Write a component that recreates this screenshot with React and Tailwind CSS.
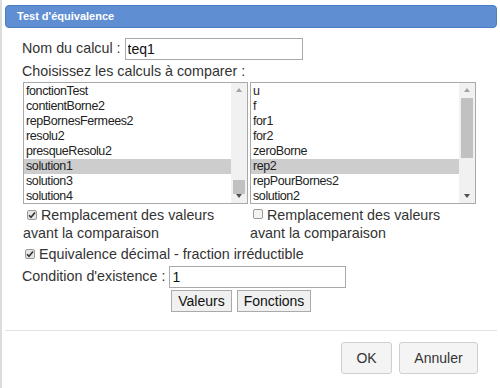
import React, { useState } from 'react';

const left = ['fonctionTest', 'contientBorne2', 'repBornesFermees2', 'resolu2', 'presqueResolu2', 'solution1', 'solution3', 'solution4'];
const right = ['u', 'f', 'for1', 'for2', 'zeroBorne', 'rep2', 'repPourBornes2', 'solution2'];

const ListBox = ({ items, selected, thumbTop, thumbHeight, width }) => (
  <div className={`flex h-[122px] border border-[#a9a9a9] bg-white ${width}`}>
    <div className="flex-1 overflow-hidden pt-[1px]">
      {items.map((it) => (
        <div
          key={it}
          className={`h-[15px] pl-[2px] text-[12.5px] leading-[15px] tracking-[-0.4px] text-[#222] ${it === selected ? 'bg-[#cdcdcd]' : ''}`}
        >
          {it}
        </div>
      ))}
    </div>
    <div className="relative w-[16px] bg-[#f1f1f1]">
      <div className="absolute left-[5px] top-[5px] h-0 w-0 border-x-[3px] border-b-[4px] border-x-transparent border-b-[#a3a3a3]" />
      <div
        className="absolute left-[2px] w-[12px] bg-[#c1c1c1]"
        style={{ top: thumbTop, height: thumbHeight }}
      />
      <div className="absolute bottom-[5px] left-[5px] h-0 w-0 border-x-[3px] border-t-[4px] border-x-transparent border-t-[#505050]" />
    </div>
  </div>
);

const Check = ({ checked }) => (
  <span
    className={`mr-[4px] inline-flex h-[10px] w-[10px] items-center justify-center rounded-[2px] border border-[#9a9a9a] align-[1px] ${checked ? 'bg-[#e6e6e6]' : 'bg-[#f3f3f3]'}`}
  >
    {checked && (
      <svg width="8" height="8" viewBox="0 0 8 8">
        <path d="M1 4.2 L3 6.2 L7 1.5" stroke="#333" strokeWidth="1.6" fill="none" />
      </svg>
    )}
  </span>
);

const App = () => {
  const [nom, setNom] = useState('teq1');
  const [cond, setCond] = useState('1');

  return (
    <div
      className="relative h-[388px] w-[500px] overflow-hidden border-l-2 border-[#dcdcdc] bg-white text-[#333]"
      style={{ fontFamily: '"Liberation Sans", Arial, sans-serif' }}
    >
      <div className="mx-[3px] mt-[5px] flex h-[23px] items-center rounded-[4px] border border-[#4b7dc6] bg-[#5f8fd2] pl-[11px] text-[11px] font-bold text-white">
        Test d'équivalence
      </div>

      <div className="pl-[20px] pt-[10px] text-[14.3px]">
        <div className="flex h-[22px] items-center">
          <span>Nom du calcul :&nbsp;</span>
          <input
            value={nom}
            onChange={(e) => setNom(e.target.value)}
            className="h-[22px] w-[178px] border border-[#a9a9a9] px-[2px] text-[14px] text-[#111] outline-none"
          />
        </div>
        <div className="mt-[1px] h-[20px] leading-[20px]">Choisissez les calculs à comparer :</div>
        <div className="mt-[1px] flex gap-[2px] pl-[1px]">
          <ListBox items={left} selected="solution1" thumbTop={97} thumbHeight={14} width="w-[225px]" />
          <ListBox items={right} selected="rep2" thumbTop={15} thumbHeight={60} width="w-[226px]" />
        </div>

        <div className="mt-[2px] flex leading-[18px]">
          <div className="w-[227px]">
            <div className="pl-[5px]">
              <Check checked />Remplacement des valeurs
            </div>
            <div className="pl-[1px]">avant la comparaison</div>
          </div>
          <div className="w-[227px]">
            <div className="pl-[4px]">
              <Check />Remplacement des valeurs
            </div>
            <div className="pl-[1px]">avant la comparaison</div>
          </div>
        </div>

        <div className="mt-[3px] h-[18px] pl-[3px] leading-[18px]">
          <Check checked />Equivalence décimal - fraction irréductible
        </div>

        <div className="mt-[3px] flex h-[22px] items-center">
          <span>Condition d'existence :&nbsp;</span>
          <input
            value={cond}
            onChange={(e) => setCond(e.target.value)}
            className="h-[22px] w-[177px] border border-[#a9a9a9] px-[2px] text-[14px] text-[#111] outline-none"
          />
        </div>

        <div className="mt-[2px] flex gap-[5px] pl-[149px]">
          <button className="h-[22px] w-[61px] border border-[#aaa] bg-[#f0f0f0] text-[14px] text-[#111]">Valeurs</button>
          <button className="h-[22px] w-[74px] border border-[#aaa] bg-[#f0f0f0] text-[14px] text-[#111]">Fonctions</button>
        </div>
      </div>

      <div className="mx-[3px] mt-[18px] h-px bg-[#e3e3e3]" />

      <div className="flex justify-end gap-[7px] pr-[22px] pt-[11px]">
        <button className="h-[32px] w-[51px] rounded-[3px] border border-[#cfcfcf] bg-[#f4f4f4] text-[14px] text-[#333]">OK</button>
        <button className="h-[32px] w-[79px] rounded-[3px] border border-[#cfcfcf] bg-[#f4f4f4] text-[14px] text-[#333]">Annuler</button>
      </div>
    </div>
  );
};

export default App;
